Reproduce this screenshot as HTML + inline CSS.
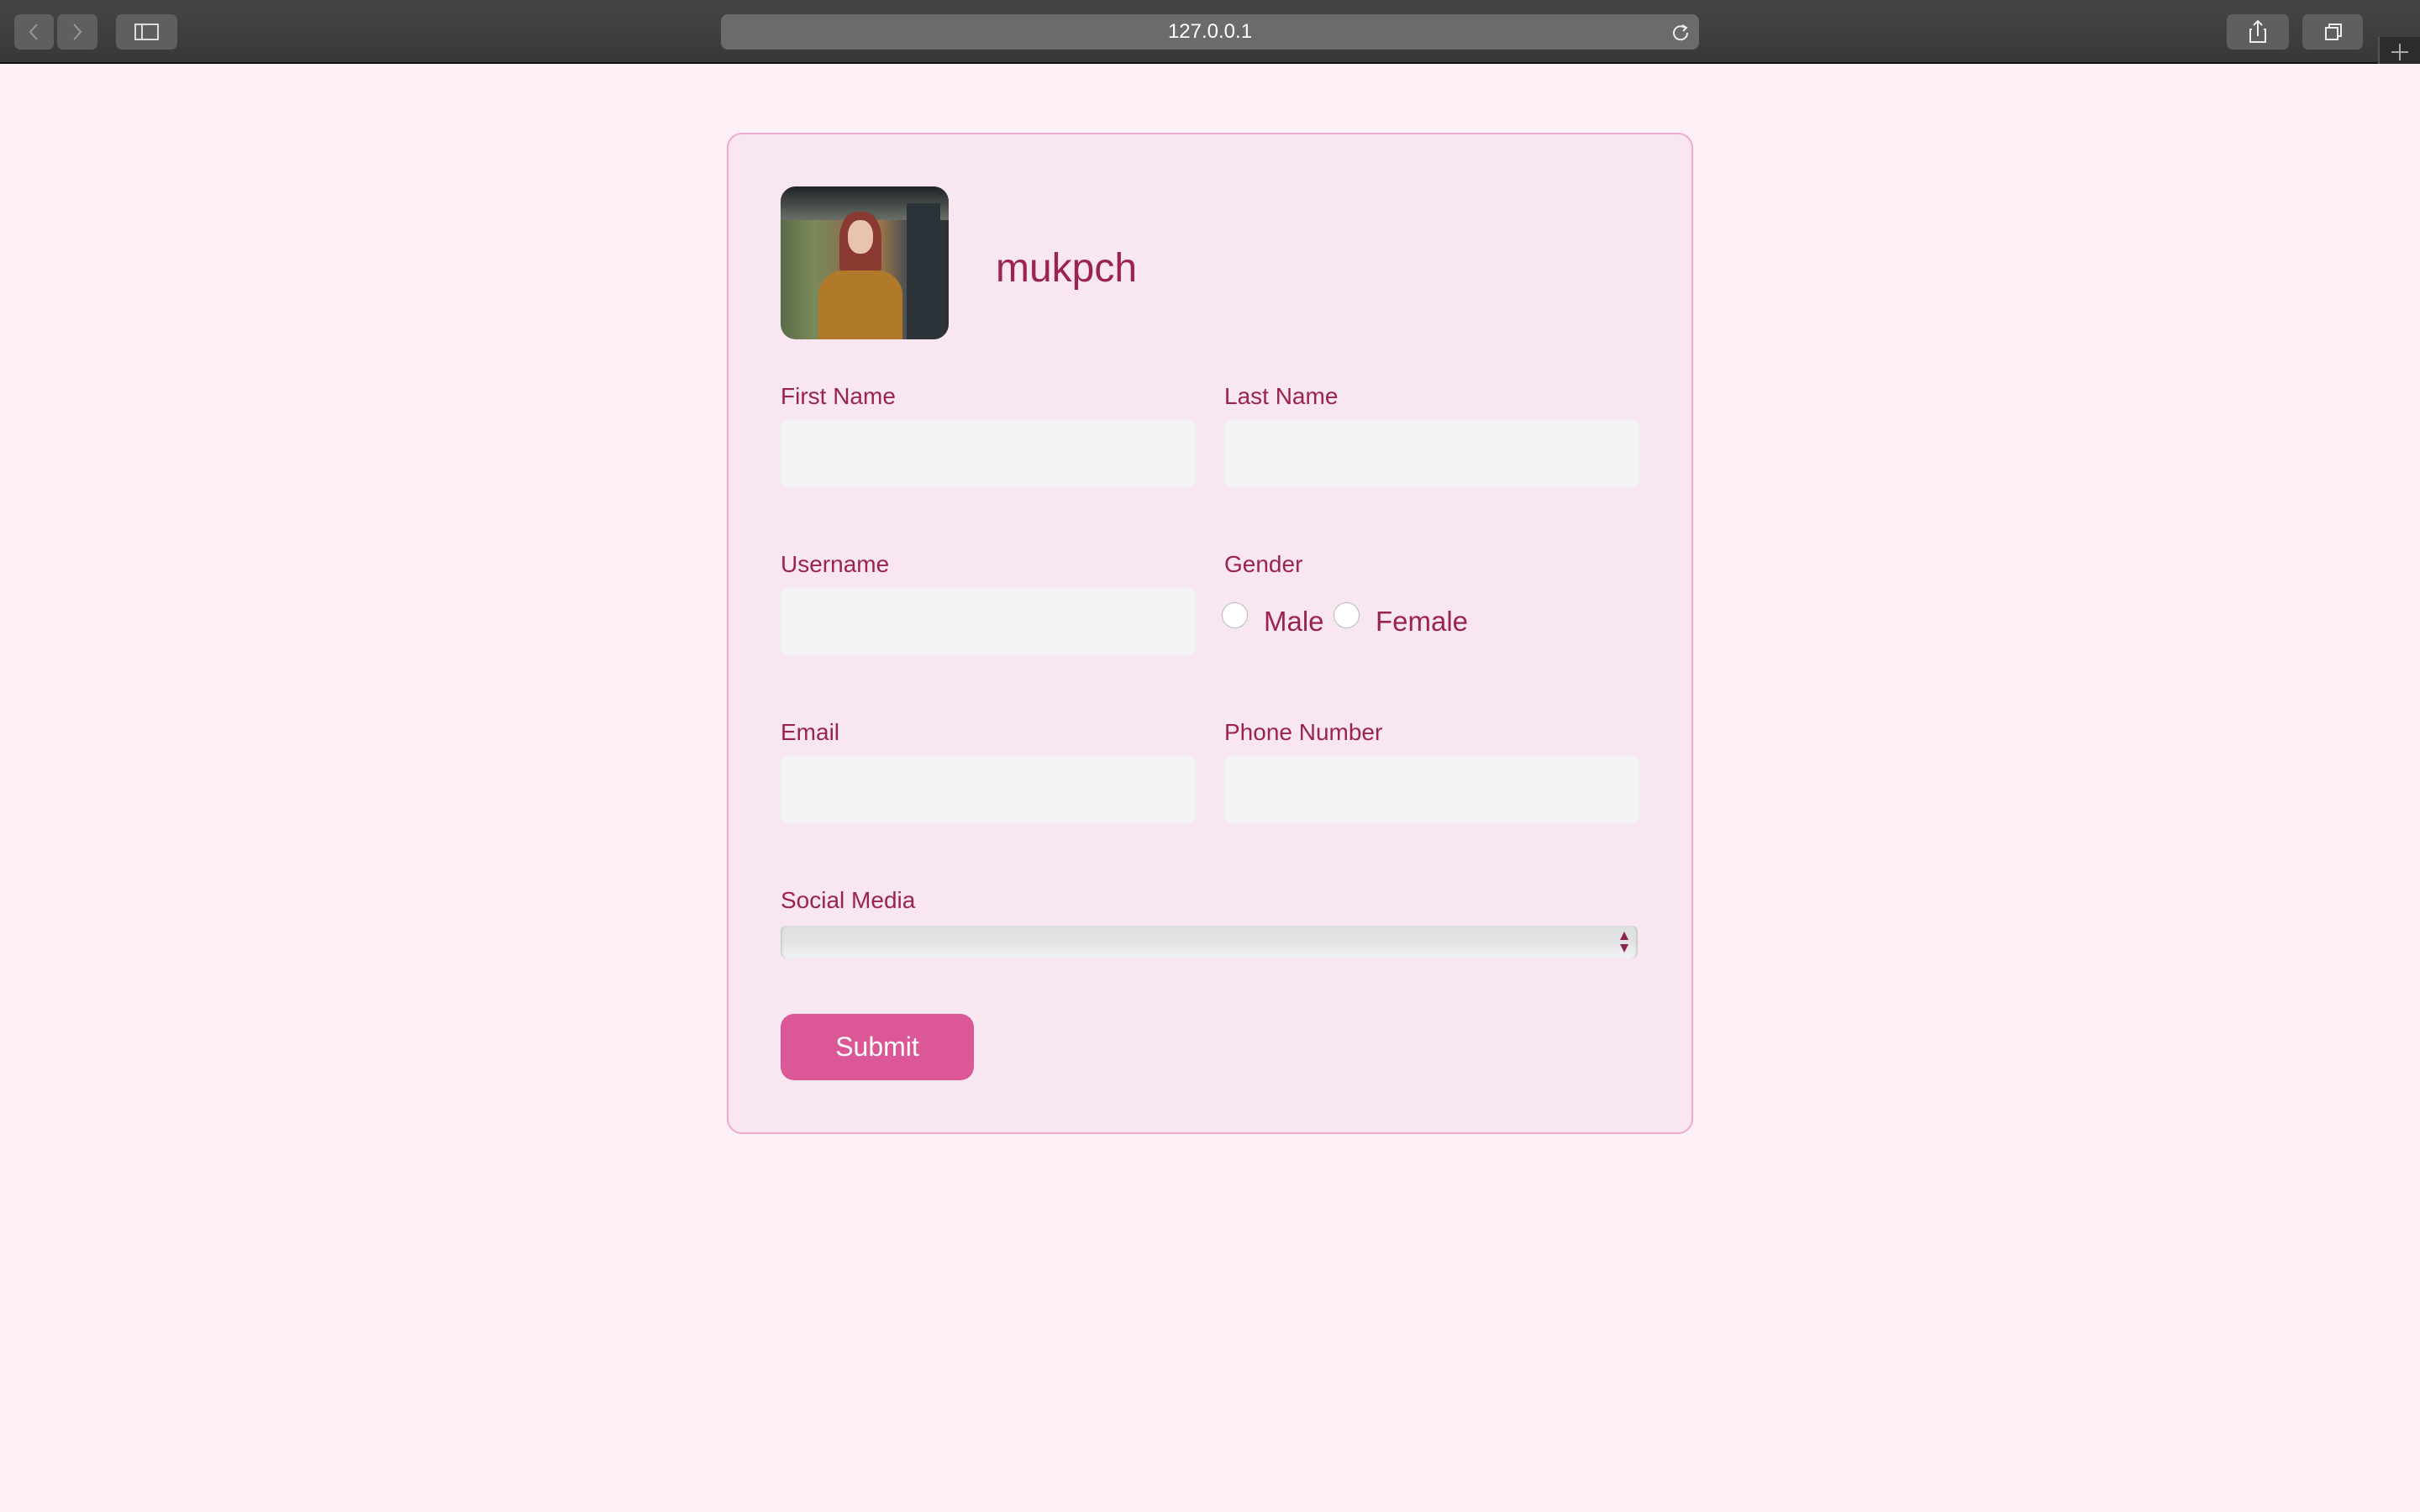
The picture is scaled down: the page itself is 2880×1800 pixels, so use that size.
<!DOCTYPE html>
<html><head><meta charset="utf-8"><style>
*{box-sizing:border-box;margin:0;padding:0}
body{width:2880px;height:1800px;background:#fdf0f6;font-family:"Liberation Sans",sans-serif;position:relative;overflow:hidden}
.tb{position:absolute;left:0;top:0;width:2880px;height:76px;background:linear-gradient(#454545,#383838);border-bottom:2px solid #111}
.btn{position:absolute;top:17px;height:42px;background:#5f5f5f;border-radius:7px}
.url{position:absolute;left:858px;top:17px;width:1164px;height:42px;background:#6b6b6b;border-radius:8px;color:#fff;font-size:24px;text-align:center;line-height:42px}
.card{position:absolute;left:865px;top:158px;width:1150px;height:1192px;background:#f8e7f1;border:2px solid #eeaad0;border-radius:18px}
.lab{position:absolute;color:#9b2350;font-size:28px;line-height:32px}
.inp{position:absolute;width:494px;height:80px;background:#f3f3f6;border-radius:9px}
.radio{position:absolute;width:31px;height:31px;border-radius:50%;background:#fff;border:1.5px solid #b9b9b9}
</style></head><body>
<div class="tb">
<div class="btn" style="left:17px;width:47px"><svg width="47" height="42"><path d="M27 12 L19 21 L27 30" stroke="#999" stroke-width="2" fill="none"/></svg></div>
<div class="btn" style="left:68px;width:48px"><svg width="48" height="42"><path d="M20 12 L28 21 L20 30" stroke="#999" stroke-width="2" fill="none"/></svg></div>
<div class="btn" style="left:138px;width:73px"><svg width="73" height="42"><rect x="23" y="12" width="27" height="18" stroke="#ddd" stroke-width="2" fill="none"/><line x1="31" y1="12" x2="31" y2="30" stroke="#ddd" stroke-width="2"/></svg></div>
<div class="url">127.0.0.1<svg style="position:absolute;right:10px;top:10px" width="24" height="24"><path d="M17 6 A8 8 0 1 0 20 12" stroke="#eee" stroke-width="2" fill="none"/><path d="M14 3 L19 6 L15 10" stroke="#eee" stroke-width="2" fill="none"/></svg></div>
<div class="btn" style="left:2650px;width:74px"><svg width="74" height="42"><path d="M30 18 H28 V33 H46 V18 H44 M37 26 V8 M32 13 L37 8 L42 13" stroke="#eee" stroke-width="2" fill="none"/></svg></div>
<div class="btn" style="left:2740px;width:72px"><svg width="72" height="42"><rect x="28" y="16" width="14" height="14" stroke="#eee" stroke-width="2" fill="none"/><path d="M32 16 V12 H46 V26 H42" stroke="#eee" stroke-width="2" fill="none"/></svg></div>
<div style="position:absolute;left:2830px;top:44px;width:50px;height:32px;background:#2c2c2c;border-left:2px solid #555"><svg width="50" height="32"><path d="M24 8 V28 M14 18 H34" stroke="#aaa" stroke-width="2"/></svg></div>
</div>
<div class="card"></div>
<div style="position:absolute;left:929px;top:222px;width:200px;height:182px;border-radius:18px;overflow:hidden;background:linear-gradient(90deg,#5a6b4a 0%,#7a8a5a 20%,#8a7050 40%,#b0804a 55%,#4a5050 75%,#2a3035 100%)">
<div style="position:absolute;left:0;top:0;width:200px;height:40px;background:linear-gradient(#1e2226,#6a7068)"></div>
<div style="position:absolute;left:70px;top:30px;width:50px;height:80px;border-radius:40% 40% 20% 20%;background:#8a3a30"></div>
<div style="position:absolute;left:80px;top:40px;width:30px;height:40px;border-radius:45%;background:#e8c4b0"></div>
<div style="position:absolute;left:45px;top:100px;width:100px;height:82px;border-radius:30px 30px 0 0;background:#b07a2a"></div>
<div style="position:absolute;left:150px;top:20px;width:40px;height:162px;background:#2a3438"></div>
</div>
<div style="position:absolute;left:1185px;top:292px;color:#9b2350;font-size:48px;line-height:56px">mukpch</div>
<div class="lab" style="left:929px;top:456px">First Name</div>
<div class="lab" style="left:1457px;top:456px">Last Name</div>
<div class="inp" style="left:929px;top:500px"></div>
<div class="inp" style="left:1457px;top:500px"></div>
<div class="lab" style="left:929px;top:656px">Username</div>
<div class="lab" style="left:1457px;top:656px">Gender</div>
<div class="inp" style="left:929px;top:700px"></div>
<div class="radio" style="left:1454px;top:717px"></div>
<div class="lab" style="left:1504px;top:720px;font-size:33px;line-height:40px">Male</div>
<div class="radio" style="left:1587px;top:717px"></div>
<div class="lab" style="left:1637px;top:720px;font-size:33px;line-height:40px">Female</div>
<div class="lab" style="left:929px;top:856px">Email</div>
<div class="lab" style="left:1457px;top:856px">Phone Number</div>
<div class="inp" style="left:929px;top:900px"></div>
<div class="inp" style="left:1457px;top:900px"></div>
<div class="lab" style="left:929px;top:1056px">Social Media</div>
<div style="position:absolute;left:929px;top:1102px;width:1020px;height:39px;border-radius:7px;background:linear-gradient(#dfe0e1,#e2e3e4 50%,#f2f3f4);box-shadow:inset 3px 0 3px -2px #bbb,inset -3px 0 3px -2px #bbb"><svg style="position:absolute;right:8px;top:5px" width="16" height="30"><path d="M8 2 L13 12 H3 Z M3 17 H13 L8 27 Z" fill="#8f2350"/></svg></div>
<div style="position:absolute;left:929px;top:1207px;width:230px;height:79px;background:#db5795;border-radius:16px;color:#fff;font-size:32px;text-align:center;line-height:79px">Submit</div>
</body></html>
